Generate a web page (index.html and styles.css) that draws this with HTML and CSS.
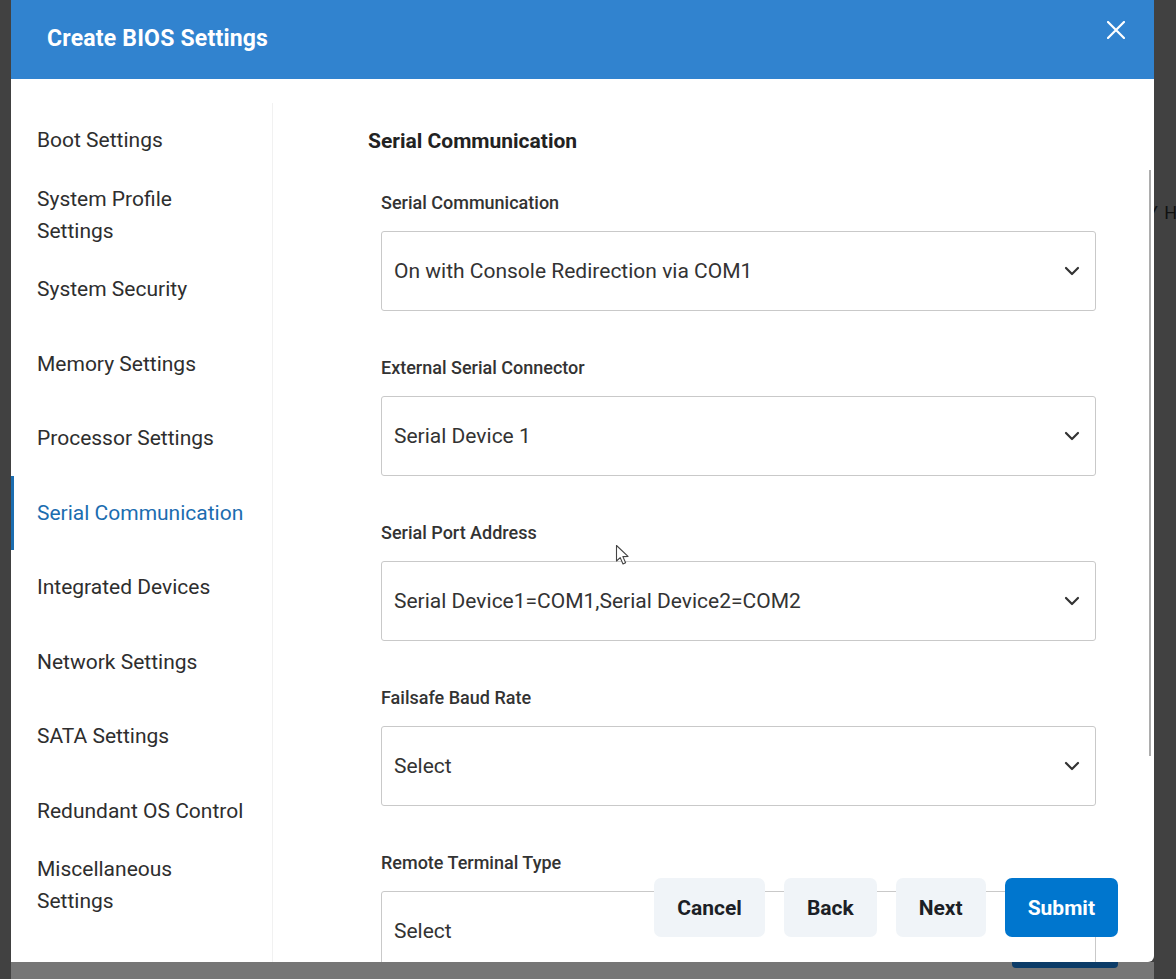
FILE: index.html
```html
<!DOCTYPE html>
<html lang="en">
<head>
<meta charset="utf-8">
<title>Create BIOS Settings</title>
<link rel="stylesheet" href="styles.css">
</head>
<body>
<span class="behind-text">Y H</span>
<div class="modal">
  <header class="modal-header">
    <h1 class="modal-title">Create BIOS Settings</h1>
    <button class="close-btn" aria-label="Close">
      <svg width="18" height="18" viewBox="0 0 18 18"><path d="M1 1 L17 17 M17 1 L1 17" stroke="#fff" stroke-width="2.2" stroke-linecap="round" fill="none"/></svg>
    </button>
  </header>
  <div class="modal-body">
    <nav class="side-nav">
      <div class="nav-item">Boot Settings</div>
      <div class="nav-item">System Profile<br>Settings</div>
      <div class="nav-item">System Security</div>
      <div class="nav-item">Memory Settings</div>
      <div class="nav-item">Processor Settings</div>
      <div class="nav-item active">Serial Communication</div>
      <div class="nav-item">Integrated Devices</div>
      <div class="nav-item">Network Settings</div>
      <div class="nav-item">SATA Settings</div>
      <div class="nav-item">Redundant OS Control</div>
      <div class="nav-item">Miscellaneous<br>Settings</div>
    </nav>
    <main class="content">
      <h2 class="section-title">Serial Communication</h2>
      <div class="fields">
        <div class="field">
          <div class="field-label">Serial Communication</div>
          <div class="select"><span>On with Console Redirection via COM1</span><svg class="chev" width="16" height="10" viewBox="0 0 16 10"><path d="M2 2 L8 8 L14 2" stroke="#333" stroke-width="2.2" fill="none" stroke-linecap="round" stroke-linejoin="round"/></svg></div>
        </div>
        <div class="field">
          <div class="field-label">External Serial Connector</div>
          <div class="select"><span>Serial Device 1</span><svg class="chev" width="16" height="10" viewBox="0 0 16 10"><path d="M2 2 L8 8 L14 2" stroke="#333" stroke-width="2.2" fill="none" stroke-linecap="round" stroke-linejoin="round"/></svg></div>
        </div>
        <div class="field">
          <div class="field-label">Serial Port Address</div>
          <div class="select"><span>Serial Device1=COM1,Serial Device2=COM2</span><svg class="chev" width="16" height="10" viewBox="0 0 16 10"><path d="M2 2 L8 8 L14 2" stroke="#333" stroke-width="2.2" fill="none" stroke-linecap="round" stroke-linejoin="round"/></svg></div>
        </div>
        <div class="field">
          <div class="field-label">Failsafe Baud Rate</div>
          <div class="select"><span>Select</span><svg class="chev" width="16" height="10" viewBox="0 0 16 10"><path d="M2 2 L8 8 L14 2" stroke="#333" stroke-width="2.2" fill="none" stroke-linecap="round" stroke-linejoin="round"/></svg></div>
        </div>
        <div class="field">
          <div class="field-label">Remote Terminal Type</div>
          <div class="select"><span>Select</span><svg class="chev" width="16" height="10" viewBox="0 0 16 10"><path d="M2 2 L8 8 L14 2" stroke="#333" stroke-width="2.2" fill="none" stroke-linecap="round" stroke-linejoin="round"/></svg></div>
        </div>
      </div>
    </main>
  </div>
  <div class="scroll-thumb"></div>
  <div class="footer-actions">
    <button class="btn">Cancel</button>
    <button class="btn">Back</button>
    <button class="btn">Next</button>
    <button class="btn primary">Submit</button>
  </div>
  <svg class="cursor" width="16" height="22" viewBox="0 0 16 22"><path d="M1.5 1.5 L1.5 17 L5.2 13.6 L8 20 L10.6 18.8 L7.9 12.6 L13 12.4 Z" fill="#fff" stroke="#444" stroke-width="1.1" stroke-linejoin="round"/></svg>
</div>
<div class="backdrop-bottom"><div class="dim-button"></div></div>
</body>
</html>
```
FILE: styles.css
```css
* { box-sizing: border-box; }
html, body { margin: 0; padding: 0; }
body {
  width: 1176px;
  height: 979px;
  overflow: hidden;
  background: #414141;
  font-family: Roboto, "Noto Sans", "Liberation Sans", sans-serif;
  position: relative;
}
.behind-text {
  position: absolute;
  left: 1147px;
  top: 203px;
  font-size: 18px;
  line-height: 20px;
  white-space: nowrap;
  color: #111;
  z-index: 0;
  letter-spacing: 1px;
}
.modal {
  position: relative;
  z-index: 1;
  margin-left: 11px;
  width: 1143px;
  height: 962px;
  background: #fff;
  border-bottom-right-radius: 6px;
  overflow: hidden;
  display: flex;
  flex-direction: column;
}
.modal-header {
  height: 79px;
  flex: none;
  background: #3183cf;
  display: flex;
  align-items: center;
  justify-content: space-between;
  padding: 0 29px 2px 36px;
}
.modal-title {
  margin: 0;
  color: #fff;
  font-size: 23px;
  font-weight: 700;
  letter-spacing: 0.2px;
}
.close-btn {
  background: none;
  border: 0;
  padding: 0;
  margin-top: -18px;
  width: 18px;
  height: 18px;
  display: flex;
}
.modal-body {
  flex: 1;
  display: flex;
  min-height: 0;
}
.side-nav {
  width: 262px;
  flex: none;
  margin-top: 24px;
  border-right: 1px solid #f1f1f1;
}
.nav-item {
  height: 74.5px;
  display: flex;
  align-items: center;
  padding-left: 26px;
  font-size: 21px;
  line-height: 32px;
  color: #2e2e2e;
}
.nav-item.active {
  color: #1b6db0;
  box-shadow: inset 3px 0 0 #1b6db0;
}
.content {
  flex: 1;
  padding: 50px 58px 0 95px;
  overflow: hidden;
}
.section-title {
  margin: 0 0 38px;
  font-size: 21px;
  line-height: 25px;
  font-weight: 700;
  color: #222;
}
.fields {
  padding-left: 13px;
  display: flex;
  flex-direction: column;
  gap: 46px;
}
.field-label {
  font-size: 18px;
  line-height: 22px;
  font-weight: 500;
  color: #333;
  margin-bottom: 17px;
}
.select {
  height: 80px;
  border: 1px solid #c9c9c9;
  border-radius: 3px;
  display: flex;
  align-items: center;
  justify-content: space-between;
  padding: 0 15px 0 12px;
  font-size: 21px;
  color: #333;
}
.chev { flex: none; }
.scroll-thumb {
  position: absolute;
  left: 1138px;
  top: 170px;
  width: 2px;
  height: 586px;
  background: #adadad;
}
.footer-actions {
  position: absolute;
  right: 36px;
  bottom: 25px;
  display: flex;
  gap: 19px;
}
.btn {
  height: 59px;
  padding: 0 23px;
  border: 0;
  border-radius: 7px;
  background: #f0f4f8;
  color: #1c1f26;
  font-family: Roboto, "Noto Sans", "Liberation Sans", sans-serif;
  font-size: 21px;
  font-weight: 700;
}
.btn.primary {
  background: #0076ce;
  color: #fff;
}
.cursor {
  position: absolute;
  left: 604px;
  top: 544px;
}
.backdrop-bottom {
  margin-left: 11px;
  width: 1143px;
  height: 17px;
  background: #767676;
}
.dim-button {
  margin-left: 1001px;
  width: 106px;
  height: 6px;
  background: #0c3c68;
  border-radius: 0 0 4px 4px;
}
```
